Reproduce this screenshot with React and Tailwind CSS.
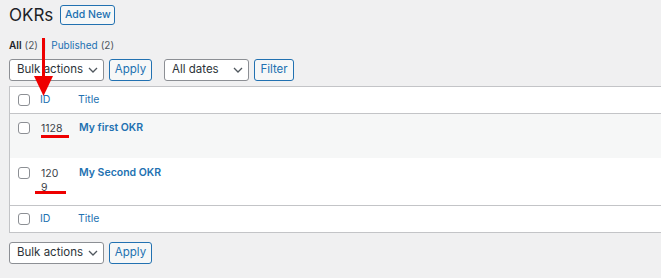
import React from "react";

const Chevron = () => (
  <svg width="10" height="6" viewBox="0 0 10 6" className="shrink-0">
    <path d="M1 1l4 4 4-4" fill="none" stroke="#50575e" strokeWidth="1.3" />
  </svg>
);

const Select = ({ label, w }) => (
  <div
    className={`flex h-[22px] items-center justify-between rounded-[3px] border border-[#8c8f94] bg-white pl-[7px] pr-[5px] text-[11.5px] text-[#2c3338] ${w}`}
  >
    <span>{label}</span>
    <Chevron />
  </div>
);

const Btn = ({ label, w }) => (
  <div
    className={`flex h-[22px] items-center justify-center rounded-[3px] border border-[#2271b1] bg-[#f6f7f7] text-[11.5px] text-[#2271b1] ${w}`}
  >
    {label}
  </div>
);

const Check = () => (
  <div className="h-[12px] w-[12px] shrink-0 rounded-[3px] border border-[#8c8f94] bg-white" />
);

export default function App() {
  return (
    <div
      className="relative h-[278px] w-[661px] overflow-hidden bg-[#f0f0f1] pl-[9px] text-[#3c434a]"
      style={{ fontFamily: "Inter, 'Noto Sans', sans-serif" }}
    >
      <div className="flex h-[29px] items-center pt-[1px]">
        <h1 className="text-[17px] leading-none text-[#1d2327]">OKRs</h1>
        <div className="ml-[7px] flex h-[20px] w-[55px] items-center justify-center rounded-[3px] border border-[#2271b1] bg-[#f6f7f7] text-[10.5px] font-medium text-[#2271b1]">
          Add New
        </div>
      </div>
      <div className="mt-[9px] flex h-[14px] items-center text-[10px] leading-none">
        <span className="font-semibold text-[#1d2327]">All</span>
        <span className="ml-[3px] text-[#50575e]">(2)</span>
        <span className="mx-[5px] text-[#c3c4c7]">|</span>
        <span className="text-[#2271b1]">Published</span>
        <span className="ml-[3px] text-[#50575e]">(2)</span>
      </div>
      <div className="mt-[7px] flex items-center">
        <Select label="Bulk actions" w="w-[95px]" />
        <div className="ml-[5px]">
          <Btn label="Apply" w="w-[43px]" />
        </div>
        <div className="ml-[12px]">
          <Select label="All dates" w="w-[85px]" />
        </div>
        <div className="ml-[5px]">
          <Btn label="Filter" w="w-[40px]" />
        </div>
      </div>
      <div className="mt-[5px] w-[700px] border border-[#c3c4c7] bg-white text-[10.5px]">
        <div className="flex h-[27px] items-center border-b border-[#c3c4c7] pl-[8px]">
          <Check />
          <span className="ml-[10px] w-[38px] text-[#2271b1]">ID</span>
          <span className="text-[#2271b1]">Title</span>
        </div>
        <div className="flex h-[44px] items-start bg-[#f6f7f7] pl-[8px] pt-[8px]">
          <Check />
          <span className="ml-[11px] w-[38px] leading-[14px]">1128</span>
          <span className="mt-[-1px] font-semibold leading-[14px] text-[#2271b1]">My first OKR</span>
        </div>
        <div className="flex h-[47px] items-start pl-[8px] pt-[9px]">
          <Check />
          <span className="ml-[11px] w-[21px] leading-[14px]">120 9</span>
          <span className="ml-[17px] mt-[-1px] font-semibold leading-[14px] text-[#2271b1]">My Second OKR</span>
        </div>
        <div className="flex h-[27px] items-center border-t border-[#c3c4c7] pl-[8px]">
          <Check />
          <span className="ml-[10px] w-[38px] text-[#2271b1]">ID</span>
          <span className="text-[#2271b1]">Title</span>
        </div>
      </div>
      <div className="mt-[9px] flex items-center">
        <Select label="Bulk actions" w="w-[95px]" />
        <div className="ml-[5px]">
          <Btn label="Apply" w="w-[43px]" />
        </div>
      </div>

      {/* annotations */}
      <div className="absolute left-[42px] top-[38px] h-[40px] w-[3px] bg-[#ee0000]" />
      <svg className="absolute left-[34px] top-[76px]" width="19" height="20" viewBox="0 0 19 20">
        <path d="M0 0h19L9.5 20z" fill="#ee0000" />
      </svg>
      <div className="absolute left-[41px] top-[135px] h-[3px] w-[28px] bg-[#ee0000]" />
      <div className="absolute left-[35px] top-[191px] h-[3px] w-[31px] bg-[#ee0000]" />
    </div>
  );
}
